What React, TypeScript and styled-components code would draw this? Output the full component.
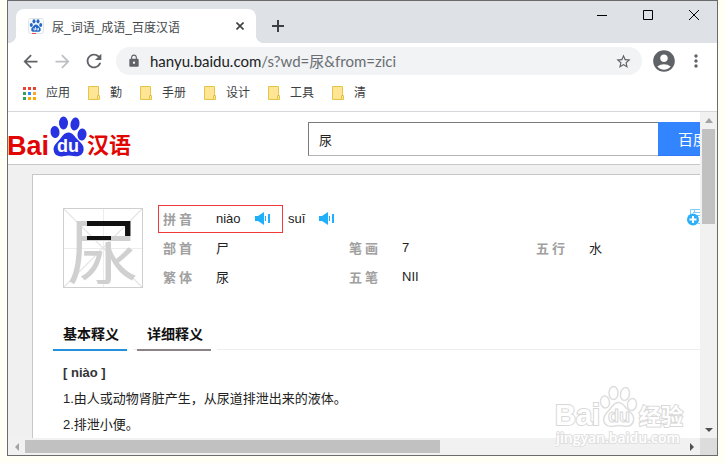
import React from 'react';
import styled, { createGlobalStyle } from 'styled-components';
import {
  MdAccountCircle,
  MdArrowBack,
  MdArrowForward,
  MdLock,
  MdMoreVert,
  MdRefresh,
  MdStarBorder,
} from 'react-icons/md';

const GlobalStyle = createGlobalStyle`
  *, *::before, *::after { box-sizing: border-box; }
  body {
    margin: 0;
    background: #fffff5;
    color: #333;
    font-family: "Liberation Sans", "Noto Sans CJK SC", sans-serif;
    font-size: 13px;
  }
  button {
    margin: 0;
    padding: 0;
    border: 0;
    background: none;
    color: inherit;
    font: inherit;
  }
  a { color: inherit; text-decoration: none; }
  svg { display: block; flex: none; }
`;

const BrowserWindow = styled.div`
  display: flex;
  flex-direction: column;
  height: calc(100vh - 7px);
  margin: 0 7px;
  border: 1px solid #6b6b6b;
  background: #fff;
`;

const TabStrip = styled.header`
  display: flex;
  height: 42px;
  flex: none;
  padding: 8px 0 0;
  background: #dee1e6;
`;

const TabFlare = styled.div<{ $side: 'left' | 'right' }>`
  width: 8px;
  height: 8px;
  align-self: flex-end;
  background: radial-gradient(
    circle at ${(p) => (p.$side === 'left' ? '0 0' : '100% 0')},
    transparent 8px,
    #fff 8px
  );
`;

const BrowserTab = styled.div`
  display: flex;
  width: 240px;
  align-items: center;
  gap: 8px;
  padding: 0 8px 0 12px;
  border-radius: 8px 8px 0 0;
  background: #fff;
  color: #45494d;
  font-size: 12px;
`;

const TabTitle = styled.span`
  flex: 1;
  white-space: nowrap;
`;

const IconButton = styled.button<{ $size: number; $color?: string }>`
  display: flex;
  width: ${(p) => p.$size}px;
  height: ${(p) => p.$size}px;
  flex: none;
  align-items: center;
  justify-content: center;
  color: ${(p) => p.$color ?? '#5f6368'};
`;

const NewTabArea = styled.div`
  flex: 1;
  display: flex;
  align-items: center;
  padding-left: 4px;
`;

const WindowControls = styled.div`
  display: flex;
  margin-top: -8px;
  height: 28px;
  color: #000;
`;

const ControlButton = styled.button`
  display: flex;
  width: 46px;
  align-items: center;
  justify-content: center;
`;

const Toolbar = styled.div`
  display: flex;
  flex: none;
  align-items: center;
  height: 36px;
  padding: 0 11px;
`;

const NavButtons = styled.nav`
  display: flex;
  gap: 10px;
  margin-right: 11px;
`;

const AddressBar = styled.div`
  display: flex;
  flex: 1;
  align-items: center;
  height: 28px;
  padding: 0 8px 0 11px;
  gap: 9px;
  border-radius: 14px;
  background: #f1f3f4;
`;

const Address = styled.div`
  flex: 1;
  color: #6a6e73;
  font-family: Lato, "Noto Sans CJK SC", sans-serif;
  font-size: 15px;
  line-height: 20px;
  white-space: nowrap;

  b { color: #202124; font-weight: 400; }
`;

const ToolbarActions = styled.div`
  display: flex;
  align-items: center;
  gap: 9px;
  margin-left: 9px;
`;

const BookmarksBar = styled.nav`
  display: flex;
  flex: none;
  align-items: center;
  gap: 18px;
  height: 33px;
  padding: 0 15px 4px;
  border-bottom: 1px solid #d6d8db;
`;

const Bookmark = styled.a`
  display: flex;
  align-items: center;
  gap: 10px;
  color: #3c4043;
  font-size: 12px;
  line-height: 18px;
`;

const ScrollFrame = styled.div`
  display: grid;
  flex: 1;
  min-height: 0;
  grid-template: minmax(0, 1fr) 17px / minmax(0, 1fr) 17px;
`;

const Viewport = styled.main`
  overflow: hidden;
  background: #f0f0f0;
`;

const Page = styled.div`
  width: max-content;
  min-width: 1160px;
`;

const VerticalBar = styled.div`
  display: flex;
  flex-direction: column;
  align-items: center;
  background: #f1f1f1;
`;

const HorizontalBar = styled.div`
  display: flex;
  align-items: center;
  background: #f1f1f1;
`;

const Track = styled.div`
  flex: 1;
  align-self: stretch;
`;

const VerticalThumb = styled.div`
  width: 13px;
  height: 29%;
  margin: 0 2px;
  background: #c1c1c1;
`;

const HorizontalThumb = styled.div`
  width: 60%;
  height: 13px;
  background: #c1c1c1;
`;

const ScrollArrow = styled(IconButton)`
  width: 17px;
  height: 17px;
`;

const Corner = styled.div`
  background: #dcdcdc;
`;

const SiteHeader = styled.header`
  display: flex;
  height: 53px;
  border-bottom: 1px solid #c8c8c8;
  background: #fff;
`;

const LogoLink = styled.a`
  width: 300px;
  padding-top: 4px;
`;

const SearchForm = styled.form`
  display: flex;
  height: 34px;
  margin-top: 10px;
`;

const SearchInput = styled.input`
  width: 350px;
  height: 34px;
  padding: 0 10px;
  border: 1px solid #7b7b7b;
  border-right: 0;
  border-bottom-color: #b6b6b6;
  border-radius: 0;
  outline: 0;
  background: #fff;
  color: #222;
  font: 13px/20px "Liberation Sans", "Noto Sans CJK SC", sans-serif;
`;

const SearchButton = styled.button`
  width: 100px;
  background: #3385ff;
  border-bottom: 1px solid #2d78f4;
  color: #fff;
  font-size: 15px;
`;

const Card = styled.article`
  width: 1000px;
  height: 600px;
  margin: 9px 0 0 24px;
  padding: 29px 20px 0;
  border: 1px solid #c8c8c8;
  background: #fff;
`;

const EntryHead = styled.section`
  display: flex;
  height: 114px;
  padding-left: 10px;
`;

const CharacterBox = styled.div`
  display: flex;
  width: 80px;
  height: 80px;
  margin: 4px 15px 0 0;
  align-items: center;
  justify-content: center;
  border: 1px solid #cfcfcf;
  background:
    linear-gradient(to top right, transparent 49%, #e4e4e4 50%, transparent 51%),
    linear-gradient(to bottom right, transparent 49%, #e4e4e4 50%, transparent 51%),
    linear-gradient(#ededed, #ededed) center / 100% 1px no-repeat,
    linear-gradient(#ededed, #ededed) center / 1px 100% no-repeat;
`;

const Character = styled.span`
  width: 72px;
  color: transparent;
  background:
    linear-gradient(#111, #111) 20px 0 / 52px 24px no-repeat,
    linear-gradient(#111, #111) 20px 24px / 24px 4px no-repeat,
    #d0d0d0;
  background-clip: text;
  -webkit-background-clip: text;
  font-family: "Noto Sans CJK SC", sans-serif;
  font-size: 72px;
  line-height: 72px;
`;

const Facts = styled.dl`
  display: grid;
  grid-template-columns: 186px 187px 155px;
  grid-auto-rows: 29px;
  margin: 0;
`;

const Fact = styled.div`
  display: flex;
  align-items: center;
  padding-left: 5px;
  white-space: nowrap;

  dt {
    width: 53px;
    flex: none;
    color: #a0a0a0;
    font-weight: 700;
    font-family: "Noto Sans CJK SC", sans-serif;
  }

  dd {
    display: flex;
    align-items: center;
    margin: 0;
    color: #222;
  }
`;

const Pinyin = styled.div`
  display: flex;
  height: 28px;
  align-items: center;
`;

const Highlighted = styled(Pinyin)`
  width: 125px;
  margin: 0 5px 0 -58px;
  border: 1px solid #f03a3a;
  padding-left: 57px;
`;

const SoundButton = styled.button`
  margin-left: 14px;
`;

const AddButton = styled.button`
  align-self: flex-start;
  margin-top: 4px;
`;

const TabList = styled.div`
  display: flex;
  height: 34px;
  margin-top: 1px;
`;

const SectionTab = styled.button<{ $active?: boolean }>`
  height: 32px;
  padding: 0 8px 0 10px;
  border-bottom: 2px solid ${(p) => (p.$active ? '#2590dc' : '#8c8484')};
  color: #111;
  font-size: 14px;
  font-weight: 700;
  line-height: 28px;
`;

const TabRule = styled.div<{ $short?: boolean }>`
  ${(p) => (p.$short ? 'width: 4px;' : 'flex: 1;')}
  height: 31px;
  margin-left: 6px;
  border-bottom: 1px solid #ededed;
`;

const Definition = styled.section`
  padding: 7px 10px 0;
  line-height: 26px;

  h2 { margin: 0; font-size: 13px; font-weight: 700; }
  p { margin: 0; color: #222; }
`;

const Watermark = styled.svg`
  position: absolute;
  right: 38px;
  bottom: 14px;
  pointer-events: none;
`;

function Paw({ color, outlined }: { color: string; outlined?: boolean }) {
  const paint = outlined
    ? { fill: '#fff', stroke: color, strokeWidth: 1.5 }
    : { fill: color };
  return (
    <g {...paint}>
      <ellipse cx="5" cy="16" rx="4.5" ry="6" transform="rotate(-8 5 16)" />
      <ellipse cx="13.5" cy="7" rx="4.5" ry="6.5" />
      <ellipse cx="25" cy="8" rx="4.5" ry="6.5" transform="rotate(10 25 8)" />
      <ellipse cx="32" cy="18.5" rx="4.5" ry="6" transform="rotate(8 32 18.5)" />
      <path d="M18.500 16.500c4.500 0 6 4 9 7 3.500 3.500 7 6 6 11-1 5.500-6 6.500-10 5.500-3.500-.8-6-.8-9 0-5 1.200-10-.2-10.800-5.500-.8-5 3-7.500 6-11 2.600-3 4-7 8.800-7z" />
    </g>
  );
}

function SiteLogo() {
  return (
    <svg width="124" height="42" viewBox="0 0 124 42" role="img" aria-label="Baidu 汉语">
      <g fill="#e10601" fontWeight="700">
        <text x="-1" y="39" fontFamily="Liberation Sans" fontSize="27">Bai</text>
        <text x="79" y="37" fontFamily="Noto Sans CJK SC" fontSize="22">汉语</text>
      </g>
      <g transform="translate(42 0)"><Paw color="#2932e1" /></g>
      <text x="49" y="36" fill="#fff" fontFamily="Liberation Sans" fontSize="18" fontWeight="700">du</text>
    </svg>
  );
}

function Favicon() {
  return (
    <svg width="16" height="16" viewBox="0 0 16 16" aria-hidden="true">
      <rect x=".5" y=".5" width="15" height="15" rx="2" fill="#f8fafc" stroke="#e1e4e8" />
      <g fill="#2469c8">
        <ellipse cx="3.300" cy="7" rx="1.500" ry="2" />
        <ellipse cx="6" cy="3.300" rx="1.500" ry="2.100" />
        <ellipse cx="10" cy="3.300" rx="1.500" ry="2.100" />
        <ellipse cx="12.700" cy="7" rx="1.500" ry="2" />
        <path d="M8 6.500c1.800 0 2.500 1.800 3.800 3 1.600 1.500 1.300 4.300-1.300 4.300H5.400c-2.500 0-2.800-2.800-1.200-4.300C5.500 8.300 6.200 6.500 8 6.500z" />
      </g>
      <path d="M6 10v2h1.500v-3M9 10v2h1.500v-2" fill="none" stroke="#fff" strokeWidth=".8" />
      <path d="M4 15.500h4" stroke="#e84b40" />
    </svg>
  );
}

const APP_COLORS = ['#ea4335', '#ea4335', '#ea4335', '#34a060', '#2a8af0', '#f9a825', '#34a060', '#f9ab00', '#f9ab00'];

function AppsIcon() {
  return (
    <svg width="13" height="13" viewBox="0 0 13 13" aria-hidden="true">
      {APP_COLORS.map((color, i) => (
        <rect key={i} x={(i % 3) * 5} y={Math.floor(i / 3) * 5} width="3" height="3" fill={color} />
      ))}
    </svg>
  );
}

function FolderIcon() {
  return (
    <svg width="12" height="14" viewBox="0 0 12 14" aria-hidden="true">
      <path d="M.5.5h10v8.500l1 1v3.500H.5z" fill="#ffe694" stroke="#e8c34a" />
      <path d="M9.500 13V9.500h2" fill="none" stroke="#e8c34a" />
    </svg>
  );
}

function SpeakerIcon() {
  return (
    <svg width="15" height="13" viewBox="0 0 15 13" aria-hidden="true" fill="#1fb0fb">
      <path d="M0 4h3l6-4v13L3 9H0z" />
      <rect x="10" y="4" width="1" height="5" />
      <rect x="13" y="2" width="2" height="9" />
    </svg>
  );
}

function AddWordIcon() {
  return (
    <svg width="22" height="18" viewBox="0 0 22 18" aria-hidden="true">
      <path d="M4.500 9V1.500H21M7 4.500h13M8.500 1v3M10 7.500h10M12 15.500h9" fill="none" stroke="#7fcdf8" />
      <circle cx="7" cy="11.500" r="6" fill="#2eb0f7" />
      <path d="M7 8v7M3.500 11.500h7" stroke="#fff" strokeWidth="2" />
    </svg>
  );
}

const ARROWS = {
  up: 'M5 11l4-5 4 5z',
  down: 'M5 7l4 4 4-4z',
  left: 'M11 5v8l-4-4z',
  right: 'M7 5v8l4-4z',
};

function Arrow({ dir, dim }: { dir: keyof typeof ARROWS; dim?: boolean }) {
  return (
    <ScrollArrow type="button" $size={17} aria-label={`Scroll ${dir}`}>
      <svg width="17" height="17" viewBox="0 0 17 17">
        <path d={ARROWS[dir]} fill={dim ? '#a3a3a3' : '#505050'} />
      </svg>
    </ScrollArrow>
  );
}

function Sound({ label }: { label: string }) {
  return (
    <SoundButton type="button" aria-label={`播放 ${label}`}>
      <SpeakerIcon />
    </SoundButton>
  );
}

const FOLDERS = ['勤', '手册', '设计', '工具', '清'];

const FACTS = [
  ['部 首', '尸'],
  ['笔 画', '7'],
  ['五 行', '水'],
  ['繁 体', '尿'],
  ['五 笔', 'NII'],
];

const WideFact = styled(Fact)`
  grid-column: 1 / -1;
`;

export default function App() {
  return (
    <>
      <GlobalStyle />
      <BrowserWindow>
        <TabStrip>
          <TabFlare $side="left" />
          <BrowserTab>
            <Favicon />
            <TabTitle>尿_词语_成语_百度汉语</TabTitle>
            <IconButton type="button" $size={16} $color="#3c4043" aria-label="Close tab">
              <svg width="8" height="8" viewBox="0 0 8 8">
                <path d="M.5.5l7 7M7.500.5l-7 7" stroke="currentColor" strokeWidth="1.600" />
              </svg>
            </IconButton>
          </BrowserTab>
          <TabFlare $side="right" />
          <NewTabArea>
            <IconButton type="button" $size={20} $color="#3c4043" aria-label="New tab">
              <svg width="12" height="12" viewBox="0 0 12 12">
                <path d="M6 0v12M0 6h12" stroke="currentColor" strokeWidth="2" />
              </svg>
            </IconButton>
          </NewTabArea>
          <WindowControls>
            <ControlButton type="button" aria-label="Minimize">
              <svg width="10" height="10"><path d="M0 5.500h10" stroke="#000" /></svg>
            </ControlButton>
            <ControlButton type="button" aria-label="Maximize">
              <svg width="10" height="10"><path d="M.5.5h9v9h-9z" fill="none" stroke="#000" /></svg>
            </ControlButton>
            <ControlButton type="button" aria-label="Close">
              <svg width="10" height="10"><path d="M0 0l10 10M10 0L0 10" stroke="#000" /></svg>
            </ControlButton>
          </WindowControls>
        </TabStrip>

        <Toolbar>
          <NavButtons>
            <IconButton type="button" $size={22} aria-label="Back"><MdArrowBack size={21} /></IconButton>
            <IconButton type="button" $size={22} $color="#bdc0c3" aria-label="Forward"><MdArrowForward size={21} /></IconButton>
            <IconButton type="button" $size={22} aria-label="Reload"><MdRefresh size={22} /></IconButton>
          </NavButtons>
          <AddressBar>
            <MdLock size={14} color="#5f6368" />
            <Address><b>hanyu.baidu.com</b>/s?wd=尿&amp;from=zici</Address>
            <IconButton type="button" $size={22} aria-label="Bookmark"><MdStarBorder size={17} /></IconButton>
          </AddressBar>
          <ToolbarActions>
            <IconButton type="button" $size={26} aria-label="Profile"><MdAccountCircle size={26} /></IconButton>
            <IconButton type="button" $size={20} aria-label="Menu"><MdMoreVert size={20} /></IconButton>
          </ToolbarActions>
        </Toolbar>

        <BookmarksBar>
          <Bookmark href="#apps"><AppsIcon />应用</Bookmark>
          {FOLDERS.map((name) => (
            <Bookmark key={name} href={`#${name}`}><FolderIcon />{name}</Bookmark>
          ))}
        </BookmarksBar>

        <ScrollFrame>
          <Viewport>
            <Page>
              <SiteHeader>
                <LogoLink href="#home"><SiteLogo /></LogoLink>
                <SearchForm onSubmit={(e) => e.preventDefault()}>
                  <SearchInput aria-label="搜索" defaultValue="尿" />
                  <SearchButton type="submit">百度一下</SearchButton>
                </SearchForm>
              </SiteHeader>
              <Card>
                <EntryHead>
                  <CharacterBox><Character>尿</Character></CharacterBox>
                  <Facts>
                    <WideFact>
                      <dt>拼 音</dt>
                      <dd>
                        <Highlighted>niào<Sound label="niào" /></Highlighted>
                        <Pinyin>suī<Sound label="suī" /></Pinyin>
                      </dd>
                    </WideFact>
                    {FACTS.map(([term, value]) => (
                      <Fact key={term}><dt>{term}</dt><dd>{value}</dd></Fact>
                    ))}
                  </Facts>
                  <AddButton type="button" aria-label="添加"><AddWordIcon /></AddButton>
                </EntryHead>
                <TabList role="tablist">
                  <SectionTab type="button" role="tab" aria-selected $active>基本释义</SectionTab>
                  <TabRule $short />
                  <SectionTab type="button" role="tab" aria-selected={false}>详细释义</SectionTab>
                  <TabRule />
                </TabList>
                <Definition>
                  <h2>[ niào ]</h2>
                  <p>1.由人或动物肾脏产生，从尿道排泄出来的液体。</p>
                  <p>2.排泄小便。</p>
                </Definition>
              </Card>
            </Page>
          </Viewport>
          <VerticalBar>
            <Arrow dir="up" dim />
            <VerticalThumb />
            <Track />
            <Arrow dir="down" />
          </VerticalBar>
          <HorizontalBar>
            <Arrow dir="left" dim />
            <HorizontalThumb />
            <Track />
            <Arrow dir="right" />
          </HorizontalBar>
          <Corner />
        </ScrollFrame>
      </BrowserWindow>
      <Watermark width="132" height="64" viewBox="0 0 132 64" role="img" aria-label="Baidu 经验">
        <g fill="#fff" stroke="#d8d8d8" strokeWidth="2" paintOrder="stroke" fontWeight="700">
          <text x="0" y="40" fontFamily="Liberation Sans" fontSize="29">Bai</text>
          <text x="84" y="39" fontFamily="Noto Sans CJK SC" fontSize="22">经验</text>
          <text x="1" y="58" fontFamily="Open Sans" fontSize="14" fontWeight="600" stroke="#e0e0e0">jingyan.baidu.com</text>
        </g>
        <g transform="translate(45 1)"><Paw color="#dedede" outlined /></g>
        <text x="53" y="37" fill="#fff" stroke="#d8d8d8" fontFamily="Liberation Sans" fontSize="18" fontWeight="700">du</text>
      </Watermark>
    </>
  );
}
